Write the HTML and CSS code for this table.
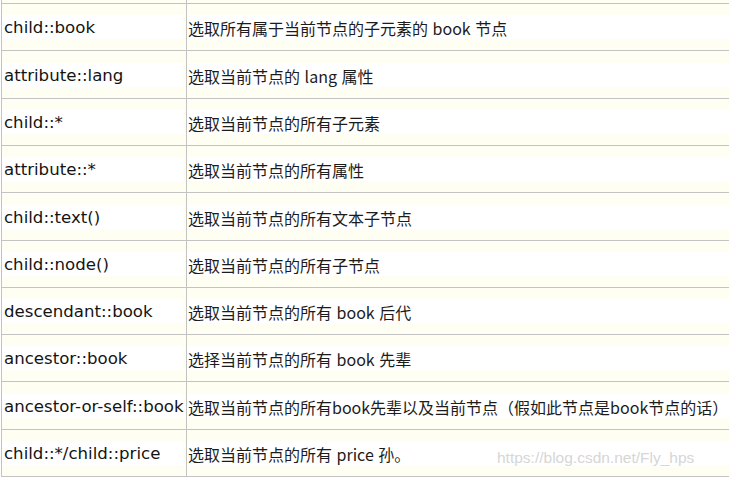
FILE: index.html
```html
<!DOCTYPE html>
<html lang="zh">
<head>
<meta charset="utf-8">
<title>XPath 轴</title>
<link rel="stylesheet" href="styles.css">
</head>
<body>
<div class="page">
  <table class="axes">
    <tr class="stub"><td class="c1"></td><td class="c2"></td></tr>
    <tr><td class="c1"><div class="band">child::book</div></td><td class="c2"><div class="band">选取所有属于当前节点的子元素的 book 节点</div></td></tr>
    <tr class="tall"><td class="c1"><div class="band">attribute::lang</div></td><td class="c2"><div class="band">选取当前节点的 lang 属性</div></td></tr>
    <tr><td class="c1"><div class="band">child::*</div></td><td class="c2"><div class="band">选取当前节点的所有子元素</div></td></tr>
    <tr><td class="c1"><div class="band">attribute::*</div></td><td class="c2"><div class="band">选取当前节点的所有属性</div></td></tr>
    <tr class="tall"><td class="c1"><div class="band">child::text()</div></td><td class="c2"><div class="band">选取当前节点的所有文本子节点</div></td></tr>
    <tr><td class="c1"><div class="band">child::node()</div></td><td class="c2"><div class="band">选取当前节点的所有子节点</div></td></tr>
    <tr><td class="c1"><div class="band">descendant::book</div></td><td class="c2"><div class="band">选取当前节点的所有 book 后代</div></td></tr>
    <tr><td class="c1"><div class="band">ancestor::book</div></td><td class="c2"><div class="band">选择当前节点的所有 book 先辈</div></td></tr>
    <tr class="tall"><td class="c1"><div class="band">ancestor-or-self::book</div></td><td class="c2"><div class="band">选取当前节点的所有book先辈以及当前节点（假如此节点是book节点的话）</div></td></tr>
    <tr><td class="c1"><div class="band">child::*/child::price</div></td><td class="c2"><div class="band">选取当前节点的所有 price 孙。</div></td></tr>
  </table>
  <div class="watermark">https://blog.csdn.net/Fly_hps</div>
</div>
</body>
</html>
```
FILE: styles.css
```css
html, body {
  margin: 0;
  padding: 0;
  background: #ffffff;
  overflow: hidden;
}
.page {
  position: relative;
  width: 729px;
  height: 478px;
  overflow: hidden;
}
.axes {
  margin-left: 1px;
  border-collapse: separate;
  border-spacing: 0;
  width: 740px;
  table-layout: fixed;
  border-left: 1px solid #c3c3c3;
}
.axes td {
  padding: 0;
  background: #fefef2;
  border-right: 1px solid #c3c3c3;
  border-bottom: 1px solid #c3c3c3;
  vertical-align: middle;
  height: 46px;
  white-space: nowrap;
}
.axes tr.tall td { height: 47px; }
.axes tr.stub td { height: 3px; }
.axes .c1 { width: 184px; }
.band {
  background: #ffffff;
  height: 24px;
  line-height: 26px;
  color: #141414;
}
.c1 .band {
  margin-right: 3px;
  padding-left: 2px;
  font-family: "DejaVu Sans", Verdana, sans-serif;
  font-size: 16.6px;
  overflow: visible;
}
.c2 .band {
  padding-left: 1px;
  font-family: "Noto Sans CJK SC", "DejaVu Sans", sans-serif;
  font-size: 16px;
  word-spacing: 1px;
  color: #1c1c1c;
}
.watermark {
  position: absolute;
  left: 497px;
  top: 449px;
  font-family: "Liberation Sans", Arial, sans-serif;
  font-size: 15.5px;
  color: #d6d6d6;
  text-shadow: 1px 1px 0 #ffffff;
  white-space: nowrap;
}
```
